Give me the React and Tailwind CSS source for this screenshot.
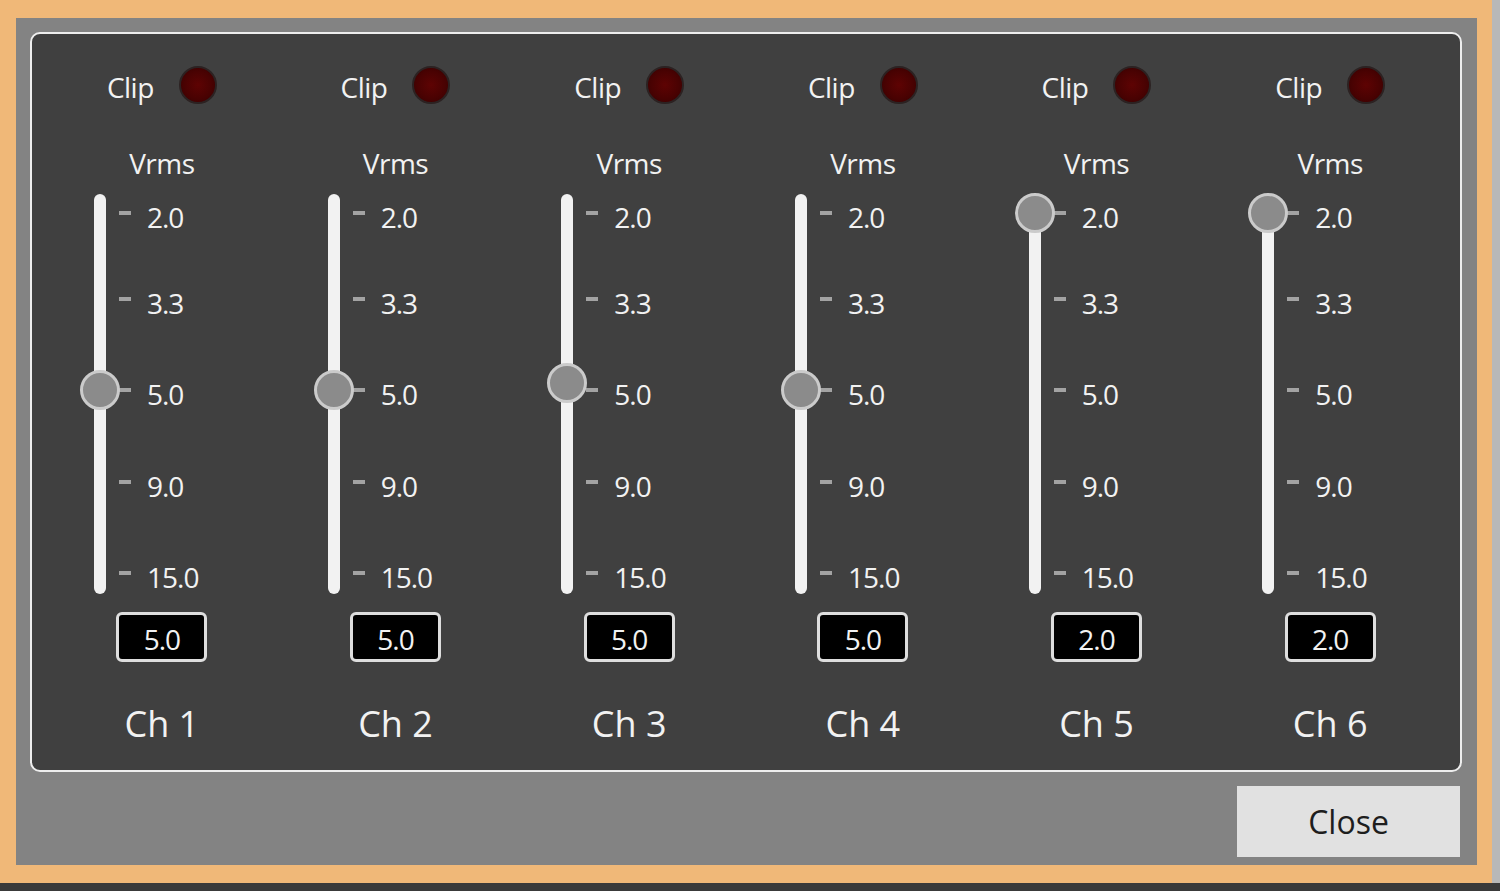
import React from "react";

const channels = [
  { name: "Ch 1", value: "5.0", thumb: "top-[176px]" },
  { name: "Ch 2", value: "5.0", thumb: "top-[176px]" },
  { name: "Ch 3", value: "5.0", thumb: "top-[169px]" },
  { name: "Ch 4", value: "5.0", thumb: "top-[176px]" },
  { name: "Ch 5", value: "2.0", thumb: "top-[-1px]" },
  { name: "Ch 6", value: "2.0", thumb: "top-[-1px]" },
];

const ticks = [
  { label: "2.0", gap: "mt-[19px]" },
  { label: "3.3", gap: "mt-[86px]" },
  { label: "5.0", gap: "mt-[91px]" },
  { label: "9.0", gap: "mt-[92px]" },
  { label: "15.0", gap: "mt-[91px]" },
];

function Channel({ ch }) {
  return (
    <div className="flex flex-col items-center">
      <div className="mt-[31px] flex h-[39px] items-center justify-center gap-[25px]">
        <span className="mt-[5px] text-[28px] leading-none tracking-[-0.5px] text-[#f2f2f2]">Clip</span>
        <div className="h-[38px] w-[38px] rounded-full border-2 border-[#2c2222] bg-[radial-gradient(circle,#5e0303_0%,#4a0202_55%,#340101_100%)]" />
      </div>

      <div className="mt-[42px] h-[34px] text-[28px] leading-[34px] tracking-[-0.5px] text-[#f2f2f2]">Vrms</div>

      <div className="relative mt-[14px] flex h-[400px] w-full">
        <div className="ml-[49px] h-full w-[12px] rounded-full bg-[#f2f2f2]" />
        <div className="ml-[13px] flex flex-col">
          {ticks.map((t) => (
            <div key={t.label} className={`flex h-0 items-center ${t.gap}`}>
              <div className="h-[4px] w-[12px] bg-[#a3a3a3]" />
              <span className="ml-[16px] mt-[8px] text-[28px] leading-none tracking-[-1px] text-[#f2f2f2]">
                {t.label}
              </span>
            </div>
          ))}
        </div>
        <div
          className={`absolute left-[35px] ${ch.thumb} h-[40px] w-[40px] rounded-full border-[3px] border-[#cbcbcb] bg-[#8b8b8b]`}
        />
      </div>

      <div className="mt-[18px] flex h-[50px] w-[91px] items-center justify-center rounded-[6px] border-[3px] border-[#dedede] bg-black pt-[4px] text-[28px] leading-none tracking-[-1px] text-[#f2f2f2]">
        {ch.value}
      </div>

      <div className="mt-[42px] h-[40px] text-[36px] leading-[40px] text-[#f2f2f2]">{ch.name}</div>
    </div>
  );
}

export default function App() {
  return (
    <div
      className="flex h-[891px] w-[1500px] bg-[#3a3a3a] font-medium"
      style={{ fontFamily: '"Open Sans", "Noto Sans", sans-serif' }}
    >
      <div className="flex h-[883px] w-[1492px] flex-col border-b-[18px] border-l-[16px] border-r-[15px] border-t-[18px] border-[#f0b878] bg-[#838383] px-[14px] pr-[15px] pt-[14px]">
        <div className="h-[740px] rounded-[10px] border-2 border-[#eeeeee] bg-[#404040] px-[13px]">
          <div className="grid grid-cols-6">
            {channels.map((ch) => (
              <Channel key={ch.name} ch={ch} />
            ))}
          </div>
        </div>
        <div className="mt-[14px] flex h-[71px] justify-end">
          <button className="mr-[2px] h-[71px] w-[223px] bg-[#e1e1e1] text-[32px] font-normal text-[#1e1e1e]">
            Close
          </button>
        </div>
      </div>
      <div className="h-[883px] w-[8px] bg-[#b8b8b8]" />
    </div>
  );
}
